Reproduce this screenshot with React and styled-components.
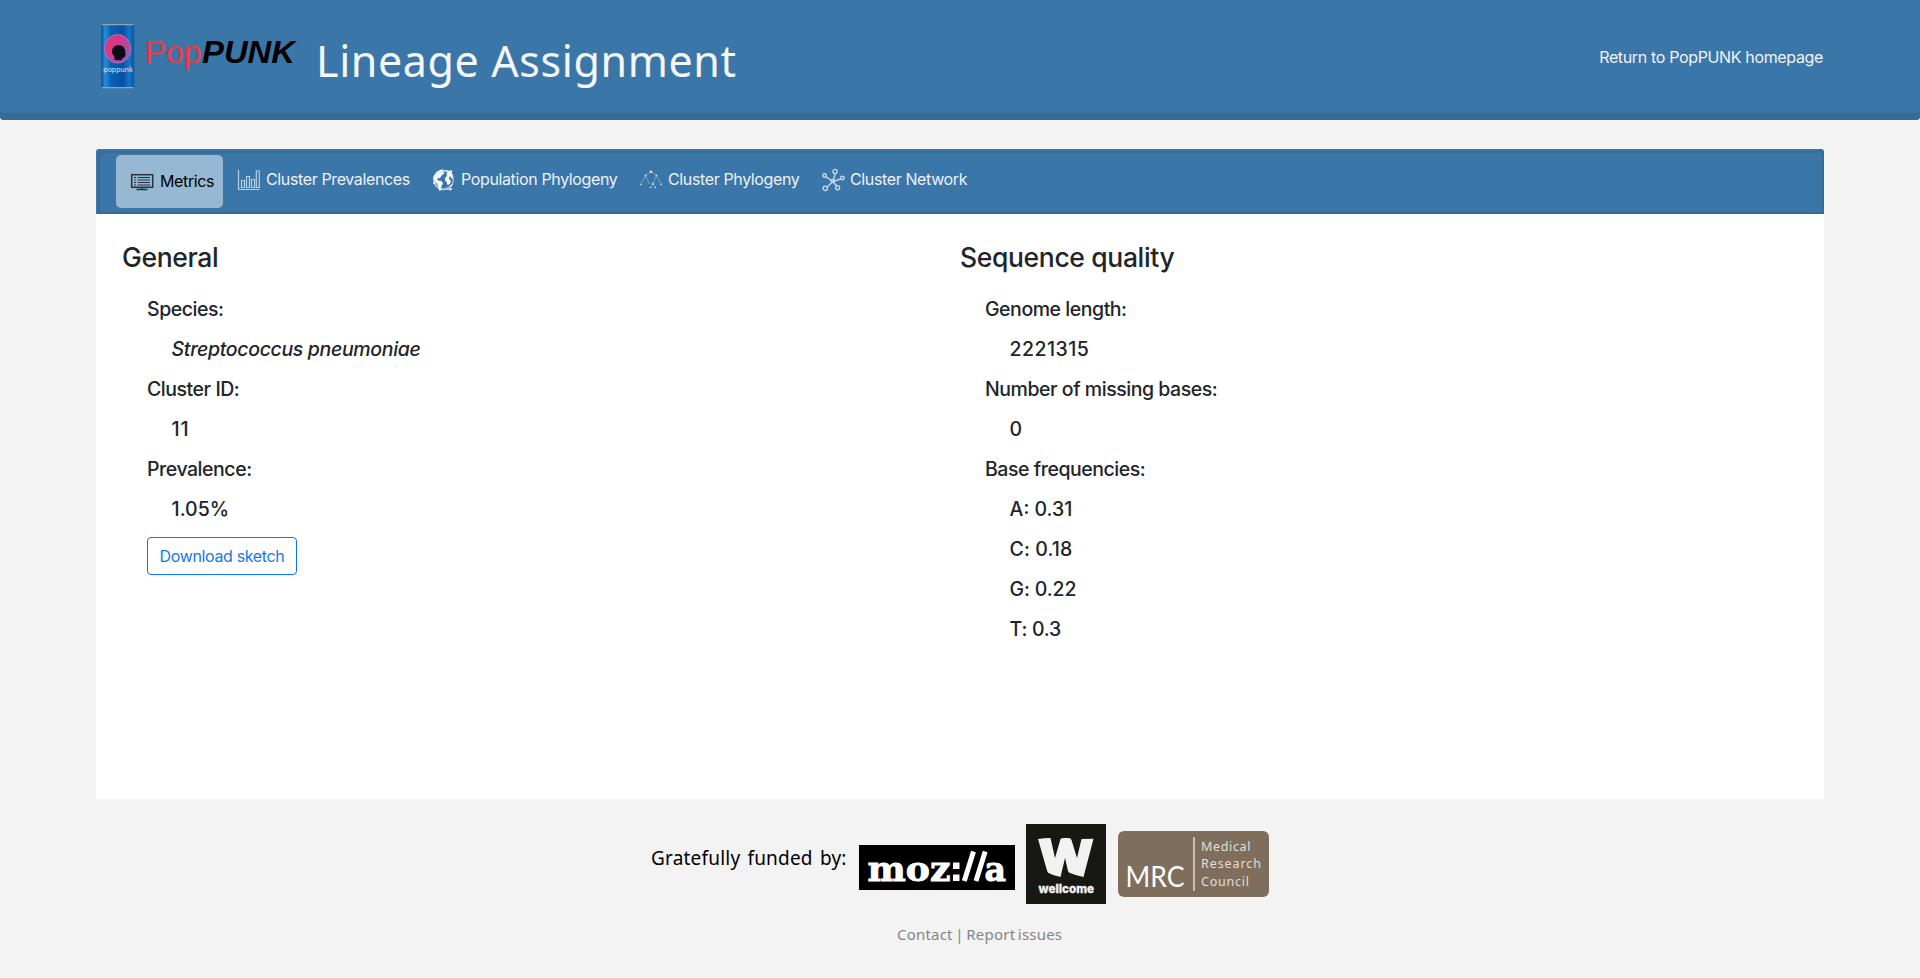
import React from "react";
import styled, { createGlobalStyle } from "styled-components";

const GlobalStyle = createGlobalStyle`
  *, *::before, *::after { box-sizing: border-box; }
  html, body, #root { height: 100%; }
  body {
    margin: 0;
    background: #f3f3f3;
    color: #212529;
    font-family: Inter, "Liberation Sans", sans-serif;
    font-size: 16px;
    overflow: hidden;
  }
  h1, h2, p, ul, dl, dd, dt { margin: 0; padding: 0; }
  a { color: inherit; text-decoration: none; }
  svg { display: block; flex: none; }
`;

const Page = styled.div`
  display: flex;
  flex-direction: column;
  height: 978px;
`;

const Header = styled.header`
  display: flex;
  align-items: flex-start;
  height: 120px;
  padding: 23px 96px 0 100px;
  background: #3b76a9;
  border-radius: 0 0 4px 4px;
  box-shadow: inset 0 -7px 0 #366b98;
`;

const Brand = styled.div`
  display: flex;
  align-items: flex-start;
`;

const Title = styled.h1`
  margin: 8px 0 0 16px;
  color: #f5f6f8;
  font-family: "Noto Sans", sans-serif;
  font-size: 43px;
  font-weight: 400;
  line-height: 60px;
  letter-spacing: 0.6px;
  white-space: nowrap;
`;

const HomeLink = styled.a`
  margin: 22px 1px 0 auto;
  color: #f0f4f8;
  font-size: 16px;
  line-height: 24px;
  letter-spacing: -0.35px;
`;

const Main = styled.main`
  display: flex;
  flex-direction: column;
  width: 1728px;
  height: 650px;
  margin: 29px 96px 0;
  background: #fff;
  border-radius: 4px 4px 0 0;
`;

const Tabs = styled.nav`
  display: flex;
  align-items: flex-start;
  height: 65px;
  padding: 6px 20px;
  background: #3b76a9;
  border-radius: 4px 4px 0 0;
  box-shadow: inset 2px 2px 0 #3b76a9, inset -2px -2px 0 #366b98, inset 4px 4px 0 #366b98;
`;

const TabLabel = styled.span`
  margin-top: -2px;
`;

const Tab = styled.a`
  display: flex;
  align-items: center;
  gap: ${(p) => (p.$active ? 6 : 5)}px;
  width: ${(p) => p.$width}px;
  height: ${(p) => (p.$active ? 53 : 50)}px;
  padding-left: 14px;
  background: ${(p) => (p.$active ? "#97b8d3" : "transparent")};
  border-radius: 5px;
  color: ${(p) => (p.$active ? "#000" : "#edf2f7")};
  font-size: 16px;
  letter-spacing: -0.37px;
  line-height: 24px;
  white-space: nowrap;
`;

const Columns = styled.div`
  display: grid;
  grid-template-columns: 838px 1fr;
  padding: 26px 26px 0;
`;

const SectionTitle = styled.h2`
  font-size: 26.5px;
  font-weight: 500;
  line-height: 34px;
  letter-spacing: -0.35px;
`;

const Facts = styled.dl`
  && { padding: 15px 0 0 25px; }
  font-size: 19.5px;
  font-weight: 500;
  line-height: 40px;
`;

const Term = styled.dt`
  letter-spacing: -0.46px;
`;

const Value = styled.dd`
  && { padding-left: 24.600px; }
  font-style: ${(p) => (p.$italic ? "italic" : "normal")};
  letter-spacing: ${(p) => (p.$track === undefined ? 0 : p.$track)}px;
`;

const DownloadButton = styled.button`
  width: 150px;
  height: 38px;
  margin: 8px 0 0 25px;
  padding: 0;
  background: #fff;
  border: 1px solid #0b74fb;
  border-radius: 4px;
  color: #1478ee;
  font: 400 16px/24px Inter, sans-serif;
  letter-spacing: -0.36px;
`;

const Funders = styled.footer`
  display: flex;
  align-items: center;
  height: 80px;
  margin: 25px 0 0 651px;
`;

const FundedBy = styled.span`
  width: 208px;
  margin-top: -12px;
  color: #000;
  font-family: "Noto Sans", sans-serif;
  font-size: 19px;
  line-height: 28px;
  letter-spacing: 0.2px;
  word-spacing: 2px;
  white-space: nowrap;
`;

const LogoGap = styled.div`
  margin-left: ${(p) => p.$left || 0}px;
  margin-top: ${(p) => p.$top || 0}px;
`;

const Links = styled.div`
  margin: 19px 0 0 897px;
  color: #858585;
  font-family: "Noto Sans", sans-serif;
  font-size: 15px;
  line-height: 22px;
  letter-spacing: 0.2px;
  word-spacing: -1.5px;
  white-space: nowrap;
`;

function Logo() {
  return (
    <svg width="200" height="68" viewBox="100 23 200 68">
      <defs>
        <linearGradient id="can" x1="0" x2="1">
          <stop offset="0" stopColor="#0a4f9c" />
          <stop offset=".12" stopColor="#2490d8" />
          <stop offset=".28" stopColor="#0b62b6" />
          <stop offset=".66" stopColor="#0850a2" />
          <stop offset=".84" stopColor="#1279c6" />
          <stop offset="1" stopColor="#0c559f" />
        </linearGradient>
        <linearGradient id="iris" x1="0" x2="1" y2=".8">
          <stop offset="0" stopColor="#f3245f" />
          <stop offset=".5" stopColor="#cf3c90" />
          <stop offset="1" stopColor="#7c5bb0" />
        </linearGradient>
      </defs>
      <rect x="101.300" y="24.500" width="33" height="63.500" rx="1.500" fill="url(#can)" />
      <path d="M102 24.600h31.500M102 87.600h31.500" stroke="#91a4b5" strokeWidth="1.400" />
      <ellipse cx="117.700" cy="48.800" rx="13" ry="14.300" fill="url(#iris)" stroke="#bd8bc4" strokeWidth=".7" />
      <circle cx="118" cy="49" r="9.800" fill="none" stroke="#e05297" strokeWidth="3.500" strokeDasharray=".8 1.600" opacity=".5" />
      <path d="M114.500 60c.3-2 .1-3.500-1-4.500-1.700-2-2-4.500-1-6.700 1.400-3.200 4.600-4.400 7.800-3.600 3.700 1 5.400 4.100 4.900 7.500l.6 2.300-.9.600c0 2.200-.7 2.600-2.700 2.400l-.5 2.200z" fill="#080b12" />
      <text x="103.300" y="71.700" fontFamily="Inter" fontSize="7" textLength="29.500" lengthAdjust="spacingAndGlyphs" fill="#dcecf8">poppunk</text>
      <text x="144.700" y="62.500" fontFamily="Liberation Sans" fontSize="32" textLength="57" lengthAdjust="spacingAndGlyphs" fill="#f03a3c">Pop</text>
      <text x="202" y="62.500" fontFamily="Liberation Sans" fontSize="32" fontWeight="700" fontStyle="italic" textLength="93" lengthAdjust="spacingAndGlyphs" fill="#000">PUNK</text>
    </svg>
  );
}

function MetricsIcon() {
  return (
    <svg width="24" height="24" viewBox="0 0 24 24" fill="none" stroke="#26343f">
      <rect x="1.700" y="4.700" width="21" height="12.600" strokeWidth="1.500" />
      <path d="M4 7.500h2M4 10h2M4 12.500h2M4 15h2M7.500 7.500h12.500M7.500 10h12.500M7.500 12.500h12.500M7.500 15h12.500" strokeWidth="1.200" />
      <path d="M12 17.500v2M6.500 19.500h11" strokeWidth="1.500" />
    </svg>
  );
}

function BarsIcon() {
  return (
    <svg width="24" height="24" viewBox="0 0 24 24" fill="none" stroke="#b8cfe2" strokeWidth="1.200">
      <path d="M1.500 2v19.500h21" />
      <path d="M4.500 19.500v-7h3v7zM9.500 19.500v-11h3v11zM14.500 19.500v-8h3v8zM19.300 19.500v-16.500h3v16.500z" />
    </svg>
  );
}

function GlobeIcon() {
  return (
    <svg width="24" height="24" viewBox="0 0 24 24">
      <circle cx="11.500" cy="12" r="9.800" fill="none" stroke="#dfeaf3" strokeWidth=".9" />
      <path d="M2 7.500L5 3.500 9 1.500l3 .5-1 2 1.500 1.500-2.500 1.500-2 3-3 .5 1 2 3.500.5 1.500 2.500-1.500 2.500-.5 3-2.500-1-1.500-4.500L2.500 13 1 10z" fill="#f4f8fb" />
      <path d="M14 2l3.500 1 3 3 1 4.500-2 0-1-2-1.500.5.5 2.500 1.500 1.500-1 3-2.500 1-1-3-1.500-1.500 0-2.500 2-2-.5-2 1-1.500-1.500-1zM18 17.500l2.500-1.500-1 3z" fill="#f4f8fb" />
      <path d="M4 5L19 3M2 14l5 6 12 2M13 21l8-5" fill="none" stroke="#dfeaf3" strokeWidth=".7" />
      <g fill="#f4f8fb"><circle cx="19" cy="3.500" r="1.300" /><circle cx="2.500" cy="15" r="1.300" /><circle cx="18.500" cy="21" r="1.300" /><circle cx="8" cy="21.500" r="1.200" /></g>
    </svg>
  );
}

function TreeIcon() {
  return (
    <svg width="24" height="24" viewBox="0 0 24 24" fill="none" stroke="#7fa8cb" strokeWidth=".8">
      <path d="M12 3.500L6.500 7.500 1.800 16.500M6.500 7.500L10.500 16M12 3.500L17.500 7.500 22.300 16.500M17.500 7.500L14 15.500M14 15.500L11.500 19M14 15.500L16.200 19.500" />
      <g fill="#dbe7f1" stroke="none"><circle cx="12" cy="3.700" r="1.300" /><circle cx="6.500" cy="7.500" r=".9" /><circle cx="17.500" cy="7.500" r=".9" /><circle cx="13.800" cy="16" r=".9" /><circle cx="1.900" cy="16.500" r=".7" /><circle cx="22.200" cy="16.500" r=".7" /><circle cx="11.500" cy="19.500" r=".8" /><circle cx="16.200" cy="19.500" r=".8" /></g>
    </svg>
  );
}

function NetworkIcon() {
  return (
    <svg width="24" height="24" viewBox="-1 0 24 24" fill="none" stroke="#c6d8e7" strokeWidth="1.400">
      <path d="M11 13.500L13.300 5M11 13.500L4 8.800M11 13.500L20 10.500M11 13.500L4.500 19.500M11 13.500L15 18.500" />
      <g fill="#3b76a9">
        <circle cx="13" cy="3.500" r="2.100" /><circle cx="2.600" cy="7.500" r="1.700" /><circle cx="20.500" cy="10" r="1.700" /><circle cx="3.300" cy="20.300" r="2.200" /><circle cx="15.600" cy="19.700" r="2" />
      </g>
      <circle cx="10.700" cy="13" r="1.600" />
    </svg>
  );
}

function MozillaLogo() {
  return (
    <svg width="156" height="45" viewBox="0 0 156 45">
      <rect width="156" height="45" fill="#000" />
      <g fontFamily="DejaVu Serif" fontWeight="700" fontSize="34" fill="#fff" stroke="#fff" strokeWidth=".9">
        <text x="8.500" y="35.500" textLength="83" lengthAdjust="spacingAndGlyphs">moz</text>
        <text x="125.500" y="35.500" textLength="21.500" lengthAdjust="spacingAndGlyphs">a</text>
      </g>
      <path d="M94 17.500h6.500v6.500h-6.500zM94 29.500h6.500v6.500h-6.500z" fill="#fff" />
      <path d="M105.300 36L114.500 6.500M117 36L126.200 6.500" stroke="#fff" strokeWidth="5" />
    </svg>
  );
}

function WellcomeLogo() {
  return (
    <svg width="80" height="80" viewBox="0 0 80 80">
      <rect width="80" height="80" fill="#171714" />
      <path d="M12 15Q18 14 24.500 14L29 34 34.500 15Q35 14 38 14H42.500Q45 14 45.500 16L51 34 55.500 15 67.500 14.700 57.500 53Q50 51.500 44 49 42.500 48.500 42 47L39 34 34.500 53Q27 51.500 22.500 49 21.500 48 21 46.500Z" fill="#f2f2f2" />
      <text x="12.500" y="69" fontFamily="Inter" fontWeight="800" fontSize="12" textLength="55.500" lengthAdjust="spacingAndGlyphs" fill="#f2f2f2" stroke="#f2f2f2" strokeWidth=".3">wellcome</text>
    </svg>
  );
}

function MrcLogo() {
  return (
    <svg width="151" height="66" viewBox="0 0 151 66">
      <rect width="151" height="66" rx="6" fill="#806e5d" />
      <path d="M76 6v54" stroke="#d6cec7" strokeWidth="1.700" />
      <text x="7.500" y="56" fontFamily="Lato" fontSize="28" textLength="59" lengthAdjust="spacingAndGlyphs" fill="#fff">MRC</text>
      <g fontSize="12.500" fill="#e4ded9" fontFamily="Noto Sans">
        <text x="83" y="19.500" textLength="49.500">Medical</text>
        <text x="83" y="37" textLength="60">Research</text>
        <text x="83" y="54.500" textLength="48">Council</text>
      </g>
    </svg>
  );
}

export default function App() {
  return (
    <Page>
      <GlobalStyle />
      <Header>
        <Brand>
          <Logo />
          <Title>Lineage Assignment</Title>
        </Brand>
        <HomeLink href="#">Return to PopPUNK homepage</HomeLink>
      </Header>
      <Main>
        <Tabs>
          <Tab href="#" $active $width={107}><MetricsIcon /><TabLabel>Metrics</TabLabel></Tab>
          <Tab href="#" $width={195}><BarsIcon /><TabLabel>Cluster Prevalences</TabLabel></Tab>
          <Tab href="#" $width={207}><GlobeIcon /><TabLabel>Population Phylogeny</TabLabel></Tab>
          <Tab href="#" $width={182}><TreeIcon /><TabLabel>Cluster Phylogeny</TabLabel></Tab>
          <Tab href="#" $width={180}><NetworkIcon /><TabLabel>Cluster Network</TabLabel></Tab>
        </Tabs>
        <Columns>
          <section>
            <SectionTitle>General</SectionTitle>
            <Facts>
              <Term>Species:</Term>
              <Value $italic $track={-0.34}>Streptococcus pneumoniae</Value>
              <Term>Cluster ID:</Term>
              <Value $track={0.8}>11</Value>
              <Term>Prevalence:</Term>
              <Value>1.05%</Value>
            </Facts>
            <DownloadButton>Download sketch</DownloadButton>
          </section>
          <section>
            <SectionTitle>Sequence quality</SectionTitle>
            <Facts>
              <Term>Genome length:</Term>
              <Value $track={0.45}>2221315</Value>
              <Term>Number of missing bases:</Term>
              <Value>0</Value>
              <Term>Base frequencies:</Term>
              <Value>A: 0.31</Value>
              <Value $track={0.1}>C: 0.18</Value>
              <Value $track={-0.15}>G: 0.22</Value>
              <Value $track={-0.25}>T: 0.3</Value>
            </Facts>
          </section>
        </Columns>
      </Main>
      <Funders>
        <FundedBy>Gratefully funded by:</FundedBy>
        <LogoGap $top={7}><MozillaLogo /></LogoGap>
        <LogoGap $left={11}><WellcomeLogo /></LogoGap>
        <LogoGap $left={12}><MrcLogo /></LogoGap>
      </Funders>
      <Links><a href="#">Contact</a> | <a href="#">Report issues</a></Links>
    </Page>
  );
}
